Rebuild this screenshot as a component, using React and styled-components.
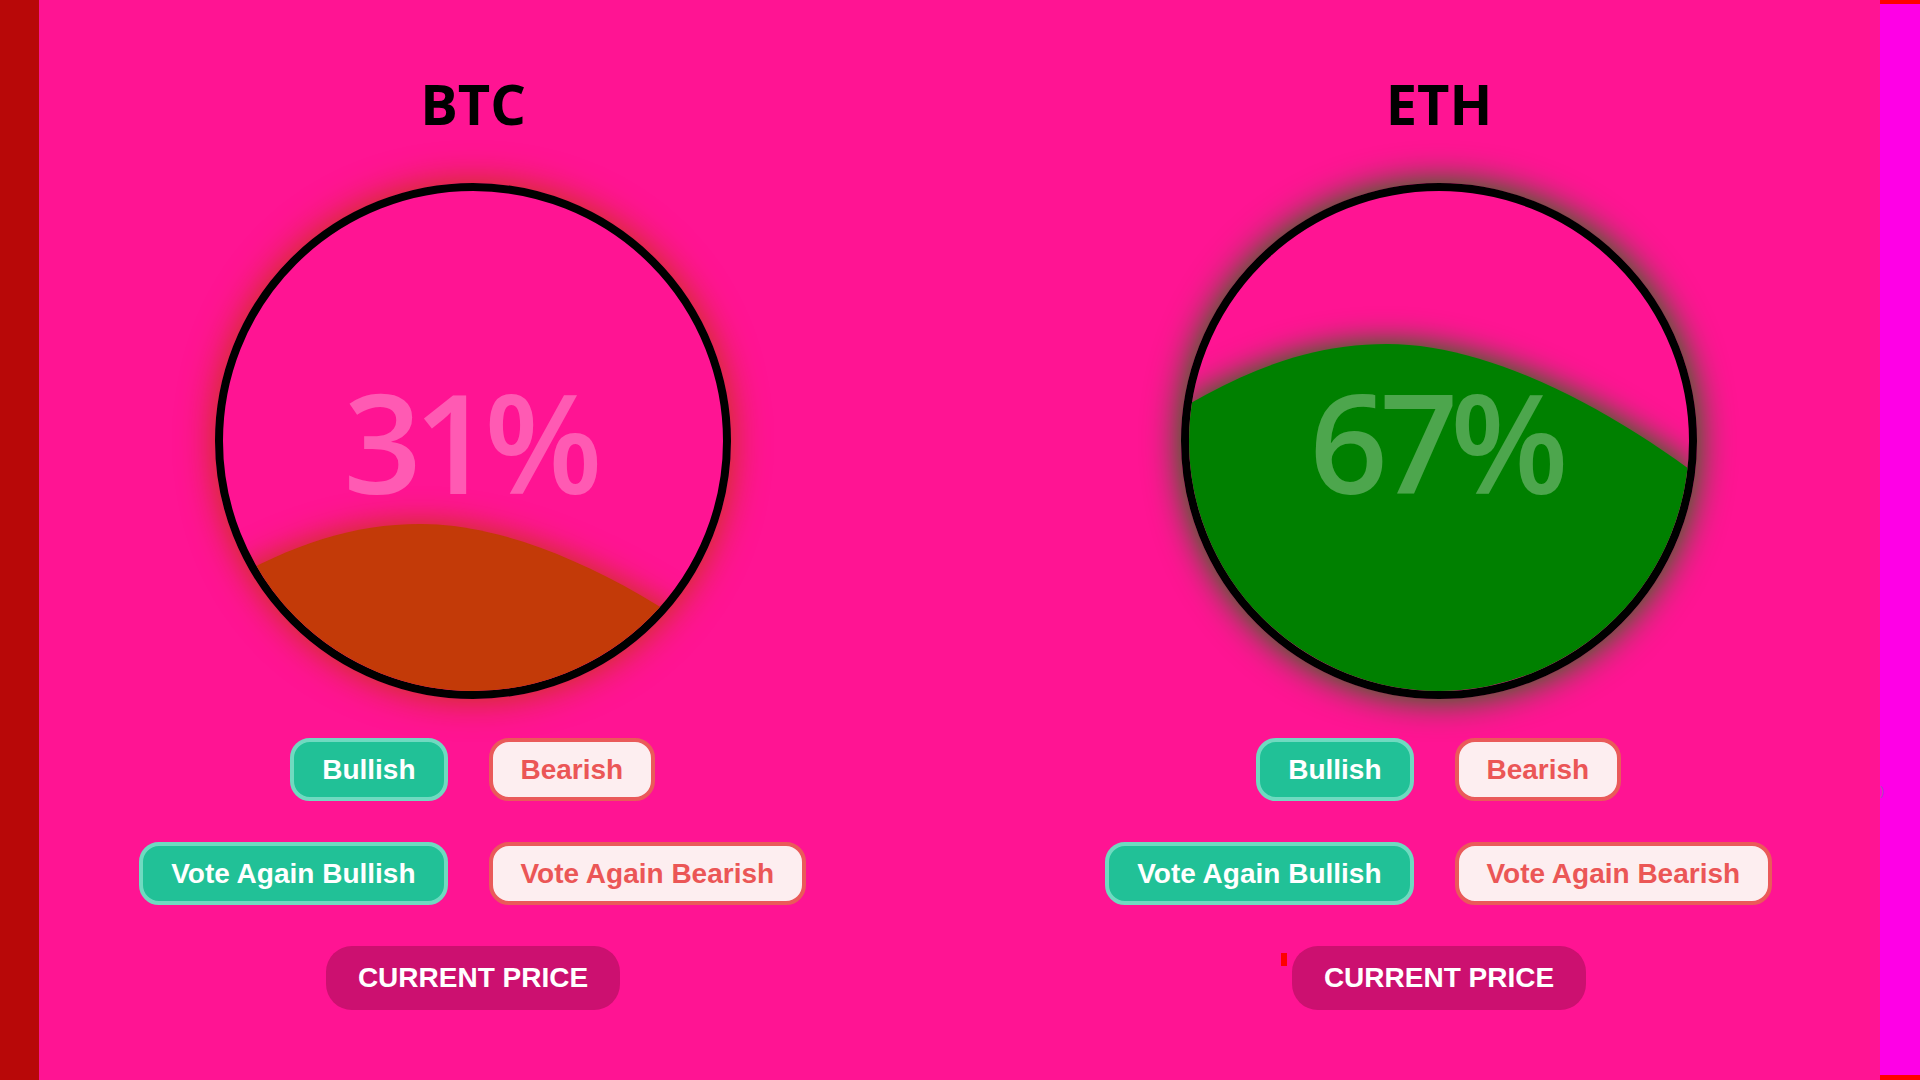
import styled, { createGlobalStyle } from 'styled-components'

const coins = [
  { symbol: 'BTC', percent: 31, fill: '#c33a08', marker: false },
  { symbol: 'ETH', percent: 67, fill: '#008000', marker: true },
]

const wavePath = percent => {
  const y = 500 * (1 - percent / 100) - 12
  return `M0 ${y + 60} C70 ${y + 20} 130 ${y} 198 ${y} C290 ${y} 400 ${y + 52} 500 ${y + 125} L500 500 L0 500 Z`
}

const App = () =>
  <Page>
    <GlobalStyle />
    <Sidebar />
    <Main>
      {coins.map(coin =>
        <Column key={coin.symbol}>
          <Title>{coin.symbol}</Title>

          <Gauge $fill={coin.fill}>
            <Wave viewBox="0 0 500 500" preserveAspectRatio="none" $fill={coin.fill}>
              <path d={wavePath(coin.percent)} fill={coin.fill} />
            </Wave>
            <Percent>{coin.percent}%</Percent>
          </Gauge>

          <VoteRow>
            <VoteButton $kind="bull">Bullish</VoteButton>
            <VoteButton $kind="bear">Bearish</VoteButton>
          </VoteRow>

          <VoteRow>
            <VoteButton $kind="bull">Vote Again Bullish</VoteButton>
            <VoteButton $kind="bear">Vote Again Bearish</VoteButton>
          </VoteRow>

          <PriceButton>
            {coin.marker && <Marker />}
            CURRENT PRICE
          </PriceButton>
        </Column>
      )}
    </Main>
    <Rail>
      <RailGlyph>)</RailGlyph>
    </Rail>
  </Page>

const GlobalStyle = createGlobalStyle`
  html, body, #root {
    margin: 0;
    height: 100%;
  }
  body {
    overflow: hidden;
    font-family: "Open Sans", "Noto Sans", sans-serif;
  }
`

const Page = styled.div`
  display: flex;
  width: 1920px;
  height: 1080px;
  background: #ff1493;
`

const Sidebar = styled.div`
  flex: 0 0 39px;
  background: #b80808;
`

const Main = styled.main`
  flex: 1;
  display: flex;
  justify-content: center;
  gap: 266px;
  padding: 65px 7px 0 0;
`

const Column = styled.section`
  width: 700px;
  display: flex;
  flex-direction: column;
  align-items: center;
`

const Title = styled.h1`
  margin: 0 0 42px;
  font-family: "Open Sans", sans-serif;
  font-weight: 700;
  font-size: 56px;
  line-height: normal;
  color: #000;
`

const Gauge = styled.div`
  display: grid;
  width: 500px;
  height: 500px;
  border: 8px solid #000;
  border-radius: 50%;
  overflow: hidden;
  box-shadow: 0 0 36px ${p => p.$fill};
  position: relative;
  isolation: isolate;
`

const Wave = styled.svg`
  grid-area: 1 / 1;
  width: 500px;
  height: 500px;
  overflow: visible;
  filter: drop-shadow(0 0 16px ${p => p.$fill});
`

const Percent = styled.div`
  grid-area: 1 / 1;
  place-self: center;
  position: relative;
  z-index: 1;
  font-family: "Open Sans", sans-serif;
  font-weight: 600;
  font-size: 137px;
  letter-spacing: -8px;
  line-height: 1;
  padding-right: 8px;
  color: rgba(255, 255, 255, 0.3);
`

const VoteRow = styled.div`
  display: grid;
  grid-template-columns: 1fr 1fr;
  column-gap: 41px;
  width: 100%;
  box-sizing: border-box;
  padding-right: 10px;
  margin-top: 39px;

  & + & {
    margin-top: 41px;
  }

  & > :first-child {
    justify-self: end;
  }

  & > :last-child {
    justify-self: start;
  }
`

const VoteButton = styled.button`
  font-family: "Liberation Sans", Arial, sans-serif;
  font-weight: 700;
  font-size: 28px;
  line-height: normal;
  padding: 11.5px 28px;
  border-radius: 20px;
  border: 4px solid ${p => p.$kind === 'bull' ? '#6fdac0' : '#ea5a5a'};
  background: ${p => p.$kind === 'bull' ? '#21c197' : '#fdeef0'};
  color: ${p => p.$kind === 'bull' ? '#fff' : '#eb5656'};
  white-space: nowrap;
  cursor: pointer;
`

const PriceButton = styled.button`
  position: relative;
  margin-top: 41px;
  font-family: "Liberation Sans", Arial, sans-serif;
  font-weight: 700;
  font-size: 28px;
  line-height: normal;
  padding: 16px 32px;
  border: none;
  border-radius: 26px;
  background: #cc1070;
  color: #fff;
  cursor: pointer;
`

const Marker = styled.span`
  position: absolute;
  left: -11px;
  top: 7px;
  width: 6px;
  height: 13px;
  background: #ff0000;
`

const Rail = styled.aside`
  flex: 0 0 40px;
  box-sizing: border-box;
  background: #ff00e6;
  border-top: 4px solid #ff0000;
  border-bottom: 5px solid #ff0000;
  padding-top: 780px;
`

const RailGlyph = styled.span`
  display: block;
  font-family: "Liberation Sans", sans-serif;
  font-size: 12px;
  color: rgba(120, 120, 140, 0.7);
`

export default App
